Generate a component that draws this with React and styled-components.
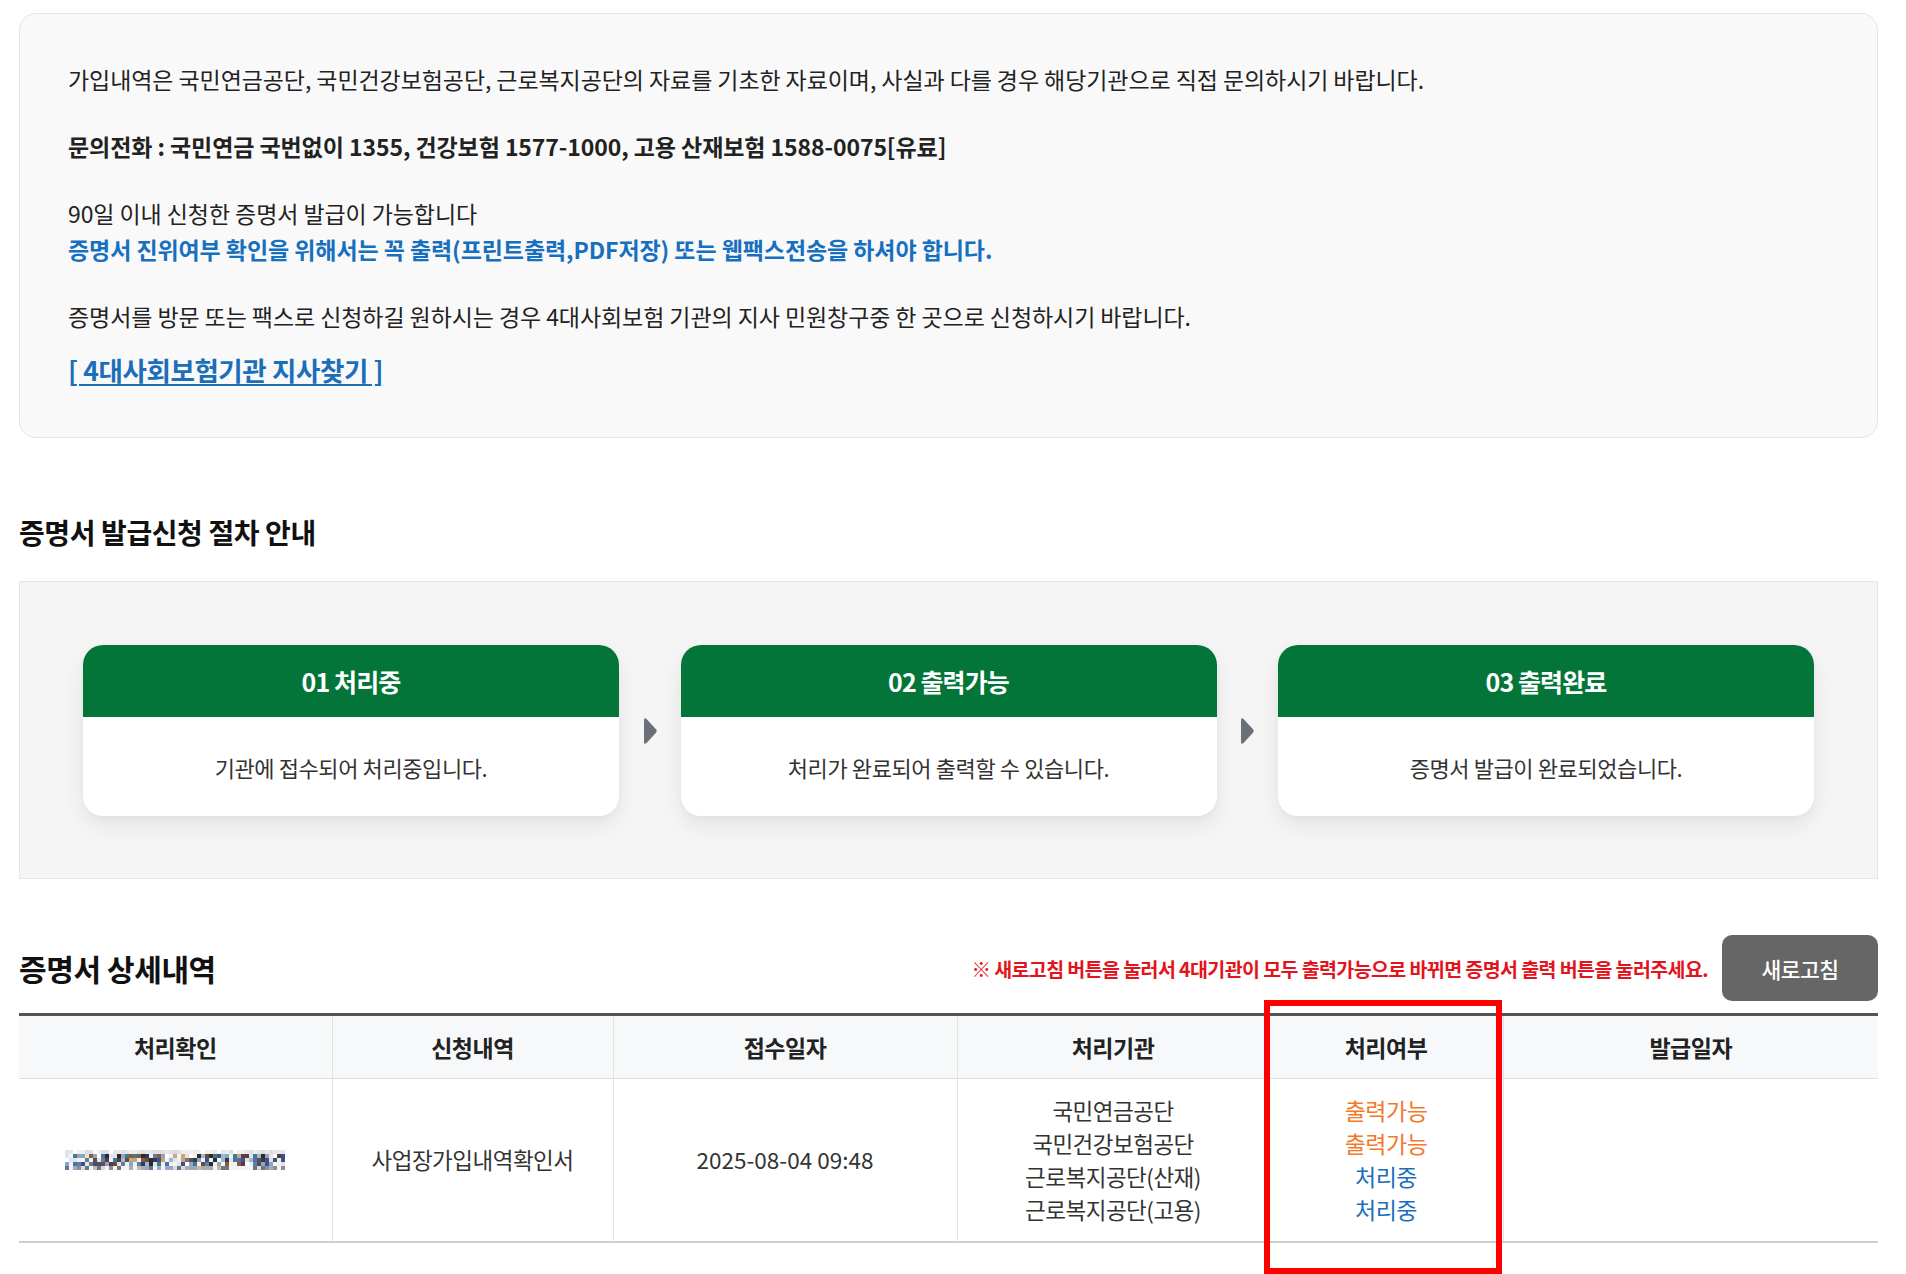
import React from 'react';
import styled, { createGlobalStyle } from 'styled-components';

const GlobalStyle = createGlobalStyle`
  html, body { margin: 0; padding: 0; background: #fff; overflow: hidden; }
  body { font-family: "Noto Sans CJK KR", "Noto Sans", sans-serif; color: #222; }
  * { box-sizing: border-box; }
`;

const Page = styled.div`
  padding: 13px 28px 0 19px;
  width: 1906px;
  height: 1274px;
`;

const InfoBox = styled.div`
  background: #f9f9f9;
  border: 1px solid #e4e4e4;
  border-radius: 17px;
  padding: 47px 48px 38px 48px;
  height: 425px;
`;

const Para = styled.p`
  margin: 0 0 ${p => p.$gap ?? 31}px;
  font-size: 23px;
  line-height: 36px;
  letter-spacing: -0.08px;
  font-weight: ${p => (p.$bold ? 700 : 400)};
  color: ${p => (p.$blue ? '#176fbf' : '#222')};
`;

const Line = styled.span`
  display: block;
  font-weight: ${p => (p.$bold ? 700 : 400)};
  color: ${p => (p.$blue ? '#176fbf' : 'inherit')};
`;

const FindLink = styled.a`
  display: inline-block;
  font-size: 26.5px;
  line-height: 36px;
  font-weight: 700;
  letter-spacing: -0.4px;
  color: #1a6fb8;
  text-decoration: underline;
  text-underline-offset: 3px;
`;

const SectionTitle = styled.h2`
  margin: ${p => p.$top ?? 0}px 0 ${p => p.$bottom ?? 0}px;
  font-size: ${p => p.$size ?? 28}px;
  line-height: 36px;
  font-weight: 700;
  letter-spacing: -0.4px;
  color: #111;
`;

const StepsBox = styled.div`
  background: #f5f5f5;
  border: 1px solid #e6e6e6;
  padding: 63px 63px 62px 63px;
  display: flex;
  align-items: center;
`;

const StepCard = styled.div`
  flex: 0 0 536px;
  height: 171px;
  background: #fff;
  border-radius: 20px;
  overflow: hidden;
  box-shadow: 0 10px 22px rgba(0, 0, 0, 0.07), 0 2px 6px rgba(0, 0, 0, 0.03);
  display: flex;
  flex-direction: column;
`;

const StepHead = styled.div`
  height: 72px;
  background: #037538;
  color: #fff;
  font-size: 25px;
  font-weight: 700;
  letter-spacing: -0.9px;
  display: flex;
  align-items: center;
  justify-content: center;
`;

const StepBody = styled.div`
  flex: 1;
  display: flex;
  align-items: center;
  justify-content: center;
  font-size: 22px;
  letter-spacing: -0.4px;
  color: #333;
`;

const Arrow = styled.div`
  flex: 1;
  display: flex;
  justify-content: center;
`;

const DetailHead = styled.div`
  margin-top: 56px;
  height: 66px;
  display: flex;
  align-items: center;
`;

const Notice = styled.span`
  margin-left: auto;
  margin-right: 14px;
  font-size: 19.5px;
  font-weight: 700;
  letter-spacing: -0.6px;
  color: #e3141c;
`;

const RefreshButton = styled.button`
  width: 156px;
  height: 66px;
  border: none;
  border-radius: 10px;
  background: #666;
  color: #fff;
  font-family: inherit;
  font-size: 21.5px;
  font-weight: 500;
  letter-spacing: -0.5px;
  cursor: pointer;
`;

const TableWrap = styled.div`
  position: relative;
  margin-top: 12px;
`;

const Table = styled.table`
  width: 100%;
  border-collapse: collapse;
  table-layout: fixed;
  border-top: 3px solid #555;
  border-bottom: 2px solid #cfcfcf;
`;

const Th = styled.th`
  height: 64px;
  background: #f7f8fa;
  border-bottom: 1px solid #dedede;
  border-left: 1px solid #e4e4e4;
  font-size: 23px;
  font-weight: 700;
  letter-spacing: -0.5px;
  color: #222;
  &:first-child { border-left: none; }
`;

const Td = styled.td`
  height: 163px;
  border-left: 1px solid #e4e4e4;
  text-align: center;
  vertical-align: middle;
  font-size: 22.5px;
  line-height: 33px;
  letter-spacing: ${p => (p.$digits ? 0 : -0.5)}px;
  color: #333;
  &:first-child { border-left: none; }
`;

const Status = styled.span`
  display: block;
  font-size: 23px;
  color: ${p => (p.$ok ? '#f4782c' : '#1a6fbd')};
`;

const Mark = styled.div`
  position: absolute;
  left: 1245px;
  top: -13px;
  width: 238px;
  height: 274px;
  border: 6px solid #ff0000;
  pointer-events: none;
`;

const steps = [
  { head: '01 처리중', body: '기관에 접수되어 처리중입니다.' },
  { head: '02 출력가능', body: '처리가 완료되어 출력할 수 있습니다.' },
  { head: '03 출력완료', body: '증명서 발급이 완료되었습니다.' },
];

const columns = [
  { title: '처리확인', w: 313 },
  { title: '신청내역', w: 281 },
  { title: '접수일자', w: 344 },
  { title: '처리기관', w: 312 },
  { title: '처리여부', w: 234 },
  { title: '발급일자', w: 375 },
];

const agencies = [
  { name: '국민연금공단', ok: true },
  { name: '국민건강보험공단', ok: true },
  { name: '근로복지공단(산재)', ok: false },
  { name: '근로복지공단(고용)', ok: false },
];

// pixelated (masked) receipt number
const mosaic = (() => {
  let s = 23;
  const rnd = () => {
    s = (s * 9301 + 49297) % 233280;
    return s / 233280;
  };
  const pick = arr => arr[Math.floor(rnd() * arr.length)];
  const top = ['#e3e4ec', '#ece7e2', '#d9dce6', '#f2eeea', '#dcdfe8', '#ffffff'];
  const ink = ['#2f3a56', '#3d4f8c', '#6d4b3a', '#8b5a3c', '#4d72ab', '#2b2b2b', '#5a3a4a',
    '#7fa8d0', '#c8a878', '#98a3b8', '#5f7f9f', '#3b7d8c', '#a0b8d8', '#44506e'];
  const soft = ['#f6f4f0', '#eef0f5', '#ffffff', '#e9e2d6', '#dbe6f2'];
  const bottom = ['#8c8f99', '#a7acb8', '#6f7480', '#c9b9a0', '#9aa9c0', '#d8d8de'];
  const cells = [];
  for (let c = 0; c < 55; c++) {
    for (let r = 0; r < 5; r++) {
      let fill;
      if (r === 0) fill = pick(top);
      else if (r === 4) fill = rnd() < 0.7 ? pick(bottom) : '#f4f4f6';
      else fill = rnd() < 0.62 ? pick(ink) : pick(soft);
      cells.push(<rect key={`${c}-${r}`} x={c * 4} y={r * 4} width="4" height="4" fill={fill} />);
    }
  }
  return cells;
})();

const MaskedCode = () => (
  <svg width="220" height="20" viewBox="0 0 220 20" style={{ display: 'block', margin: '0 auto' }}>
    {mosaic}
  </svg>
);

const StepArrow = () => (
  <svg width="16" height="28" viewBox="0 0 16 28">
    <path d="M2 3 Q2 0 4.5 2 L14 12.3 Q15.5 14 14 15.7 L4.5 26 Q2 28 2 25 Z" fill="#6b7078" />
  </svg>
);

export default function App() {
  return (
    <>
      <GlobalStyle />
      <Page>
        <InfoBox>
          <Para>가입내역은 국민연금공단, 국민건강보험공단, 근로복지공단의 자료를 기초한 자료이며, 사실과 다를 경우 해당기관으로 직접 문의하시기 바랍니다.</Para>
          <Para $bold>문의전화 : 국민연금 국번없이 1355, 건강보험 1577-1000, 고용 산재보험 1588-0075[유료]</Para>
          <Para>
            <Line>90일 이내 신청한 증명서 발급이 가능합니다</Line>
            <Line $bold $blue>증명서 진위여부 확인을 위해서는 꼭 출력(프린트출력,PDF저장) 또는 웹팩스전송을 하셔야 합니다.</Line>
          </Para>
          <Para $gap={18}>증명서를 방문 또는 팩스로 신청하길 원하시는 경우 4대사회보험 기관의 지사 민원창구중 한 곳으로 신청하시기 바랍니다.</Para>
          <FindLink href="#">[ 4대사회보험기관 지사찾기 ]</FindLink>
        </InfoBox>

        <SectionTitle $top={76} $bottom={31}>증명서 발급신청 절차 안내</SectionTitle>
        <StepsBox>
          {steps.map((s, i) => (
            <React.Fragment key={s.head}>
              {i > 0 && (
                <Arrow>
                  <StepArrow />
                </Arrow>
              )}
              <StepCard>
                <StepHead>{s.head}</StepHead>
                <StepBody>{s.body}</StepBody>
              </StepCard>
            </React.Fragment>
          ))}
        </StepsBox>

        <DetailHead>
          <SectionTitle $size={30}>증명서 상세내역</SectionTitle>
          <Notice>※ 새로고침 버튼을 눌러서 4대기관이 모두 출력가능으로 바뀌면 증명서 출력 버튼을 눌러주세요.</Notice>
          <RefreshButton>새로고침</RefreshButton>
        </DetailHead>

        <TableWrap>
          <Table>
            <colgroup>
              {columns.map(c => (
                <col key={c.title} style={{ width: c.w }} />
              ))}
            </colgroup>
            <thead>
              <tr>
                {columns.map(c => (
                  <Th key={c.title}>{c.title}</Th>
                ))}
              </tr>
            </thead>
            <tbody>
              <tr>
                <Td><MaskedCode /></Td>
                <Td>사업장가입내역확인서</Td>
                <Td $digits>2025-08-04 09:48</Td>
                <Td>
                  {agencies.map(a => (
                    <Line key={a.name}>{a.name}</Line>
                  ))}
                </Td>
                <Td>
                  {agencies.map(a => (
                    <Status key={a.name} $ok={a.ok}>{a.ok ? '출력가능' : '처리중'}</Status>
                  ))}
                </Td>
                <Td></Td>
              </tr>
            </tbody>
          </Table>
          <Mark />
        </TableWrap>
      </Page>
    </>
  );
}
